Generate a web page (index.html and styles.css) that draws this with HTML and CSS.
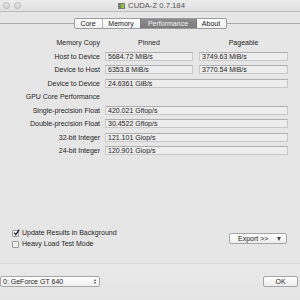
FILE: index.html
```html
<!DOCTYPE html>
<html>
<head>
<meta charset="utf-8">
<link rel="stylesheet" href="styles.css">
</head>
<body>
<div class="window">
  <div class="titlebar">
    <div class="lights"><span class="light"></span><span class="light"></span></div>
    <div class="title">
      <svg class="appicon" width="7" height="6" viewBox="0 0 7 6"><rect x="0" y="0" width="7" height="6" fill="#7a7a7a"/><rect x="3" y="1" width="3" height="4" fill="#8fc23a"/></svg>
      <span>CUDA-Z 0.7.184</span>
    </div>
  </div>

  <div class="tabbar">
    <div class="tabs">
      <span class="tab tab-core">Core</span>
      <span class="tab tab-mem">Memory</span>
      <span class="tab tab-perf active">Performance</span>
      <span class="tab tab-about">About</span>
    </div>
  </div>

  <div class="main">
    <div class="grid">
      <div class="label">Memory Copy</div>
      <div class="head">Pinned</div>
      <div class="head p2">Pageable</div>

      <div class="label">Host to Device</div>
      <div class="field">5684.72 MiB/s</div>
      <div class="field p2">3749.63 MiB/s</div>

      <div class="label">Device to Host</div>
      <div class="field">6353.8 MiB/s</div>
      <div class="field p2">3770.54 MiB/s</div>

      <div class="label">Device to Device</div>
      <div class="field wide">24.6361 GiB/s</div>

      <div class="label">GPU Core Performance</div>
      <div class="empty"></div>

      <div class="label">Single-precision Float</div>
      <div class="field wide">420.021 Gflop/s</div>

      <div class="label">Double-precision Float</div>
      <div class="field wide">30.4522 Gflop/s</div>

      <div class="label">32-bit Integer</div>
      <div class="field wide">121.101 Giop/s</div>

      <div class="label">24-bit Integer</div>
      <div class="field wide">120.901 Giop/s</div>
    </div>

    <div class="options">
      <div class="checks">
        <label class="check"><span class="box checked"><svg width="7" height="7" viewBox="0 0 7 7"><path d="M1.3 3.6 L2.8 5.6 L6.2 0.6" fill="none" stroke="#222" stroke-width="1.2"/></svg></span>Update Results in Background</label>
        <label class="check"><span class="box"></span>Heavy Load Test Mode</label>
      </div>
      <div class="export">
        <span>Export &gt;&gt;</span>
        <span class="down"></span>
      </div>
    </div>
  </div>

  <div class="bottombar">
    <div class="select">
      <span>0: GeForce GT 640</span>
      <span class="updown"><span class="up"></span><span class="dn"></span></span>
    </div>
    <div class="ok">OK</div>
  </div>
</div>
</body>
</html>
```

FILE: styles.css
```css
* { box-sizing: border-box; }
html, body { margin: 0; padding: 0; }
body {
  width: 300px;
  height: 300px;
  overflow: hidden;
  background: #e6e6e6;
  font-family: "Liberation Sans", Arial, sans-serif;
  font-size: 7px;
  color: #1e1e1e;
}
.window {
  height: 300px;
  display: flex;
  flex-direction: column;
}
.titlebar {
  height: 12px;
  position: relative;
  background: linear-gradient(#ededed, #e0e0e0);
  border-bottom: 1px solid #bdbdbd;
  display: flex;
  align-items: center;
  justify-content: center;
}
.lights {
  position: absolute;
  left: 3px;
  top: 2px;
  display: flex;
  gap: 4px;
}
.light {
  width: 7px;
  height: 7px;
  border-radius: 50%;
  background: linear-gradient(#e9e9e9, #d2d2d2);
  border: 1px solid #b8b8b8;
}
.title {
  display: flex;
  align-items: center;
  gap: 3px;
  color: #555;
  font-size: 7.7px;
  line-height: 11px;
  margin-left: 3px;
}
.appicon { display: block; }

.tabbar {
  margin-top: 6px;
  height: 11px;
  display: flex;
  align-items: center;
}
.tabbar::before, .tabbar::after {
  content: "";
  flex: 1;
  height: 1px;
  background: #a9a9a9;
}
.tabs {
  display: flex;
  height: 11px;
  border: 1px solid #9c9c9c;
  border-radius: 2px;
  overflow: hidden;
  background: linear-gradient(#ffffff, #f0f0f0);
}
.tab {
  display: flex;
  align-items: center;
  justify-content: center;
  height: 9px;
  font-size: 7px;
  color: #1a1a1a;
  border-left: 1px solid #b5b5b5;
}
.tab:first-child { border-left: none; }
.tab-core { width: 27px; }
.tab-mem { width: 38px; }
.tab-perf { width: 56px; }
.tab-about { width: 30px; }
.tab.active {
  background: linear-gradient(#8d8d8d, #7c7c7c);
  color: #f4f4f4;
  border-left-color: #7a7a7a;
}
.tab.active + .tab { border-left-color: #7a7a7a; }

.main {
  flex: 1;
  display: flex;
  flex-direction: column;
}
.grid {
  margin-top: 7px;
  display: grid;
  grid-template-columns: 100px 88px 90px;
  column-gap: 5px;
  grid-auto-rows: 13.5px;
  align-items: center;
}
.p2 { margin-left: 1px; }
.label {
  grid-column: 1;
  text-align: right;
  white-space: nowrap;
  line-height: 9px;
}
.head {
  text-align: center;
  line-height: 9px;
}
.wide { grid-column: 2 / 4; }
.empty { grid-column: 2 / 4; }
.field {
  height: 9px;
  line-height: 8px;
  padding-left: 2px;
  background: #ededed;
  border: 1px solid #c8c8c8;
  border-top-color: #aeaeae;
  white-space: nowrap;
  overflow: hidden;
  color: #222;
}

.options {
  margin-top: auto;
  margin-bottom: 15px;
  display: flex;
  align-items: flex-end;
  justify-content: space-between;
  padding-left: 12px;
  padding-right: 13px;
}
.checks {
  display: flex;
  flex-direction: column;
  gap: 3px;
}
.check {
  display: flex;
  align-items: center;
  gap: 3px;
  height: 8px;
  line-height: 8px;
}
.box {
  width: 7px;
  height: 7px;
  border: 1px solid #9a9a9a;
  border-radius: 1px;
  background: linear-gradient(#ffffff, #e9e9e9);
  position: relative;
}
.box svg {
  position: absolute;
  left: 0;
  top: -2px;
}
.export {
  width: 58px;
  height: 11px;
  margin-bottom: 4px;
  border: 1px solid #a5a5a5;
  border-radius: 2px;
  background: linear-gradient(#ffffff, #ededed);
  display: flex;
  align-items: center;
  justify-content: space-between;
  padding: 0 5px 0 8px;
  font-size: 7px;
}
.down {
  width: 0;
  height: 0;
  border-left: 2.5px solid transparent;
  border-right: 2.5px solid transparent;
  border-top: 4px solid #444;
}

.bottombar {
  height: 37px;
  border-top: 1px solid #d9d9d9;
  background: linear-gradient(#e9e9e9, #e4e4e4);
  display: flex;
  align-items: flex-start;
  justify-content: space-between;
  padding: 12px 2px 0 0;
}
.select {
  width: 100px;
  height: 11px;
  border: 1px solid #a7a7a7;
  border-radius: 2px;
  background: linear-gradient(#ffffff, #ededed);
  display: flex;
  align-items: center;
  justify-content: space-between;
  padding: 0 2px 0 2px;
  font-size: 7px;
}
.updown {
  display: flex;
  flex-direction: column;
  gap: 1px;
  margin-right: 1px;
}
.up, .dn {
  width: 0;
  height: 0;
  border-left: 1.5px solid transparent;
  border-right: 1.5px solid transparent;
}
.up { border-bottom: 2px solid #444; }
.dn { border-top: 2px solid #444; }
.ok {
  width: 35px;
  height: 11px;
  border: 1px solid #a5a5a5;
  border-radius: 2px;
  background: linear-gradient(#ffffff, #ededed);
  display: flex;
  align-items: center;
  justify-content: center;
  font-size: 7px;
}
```
